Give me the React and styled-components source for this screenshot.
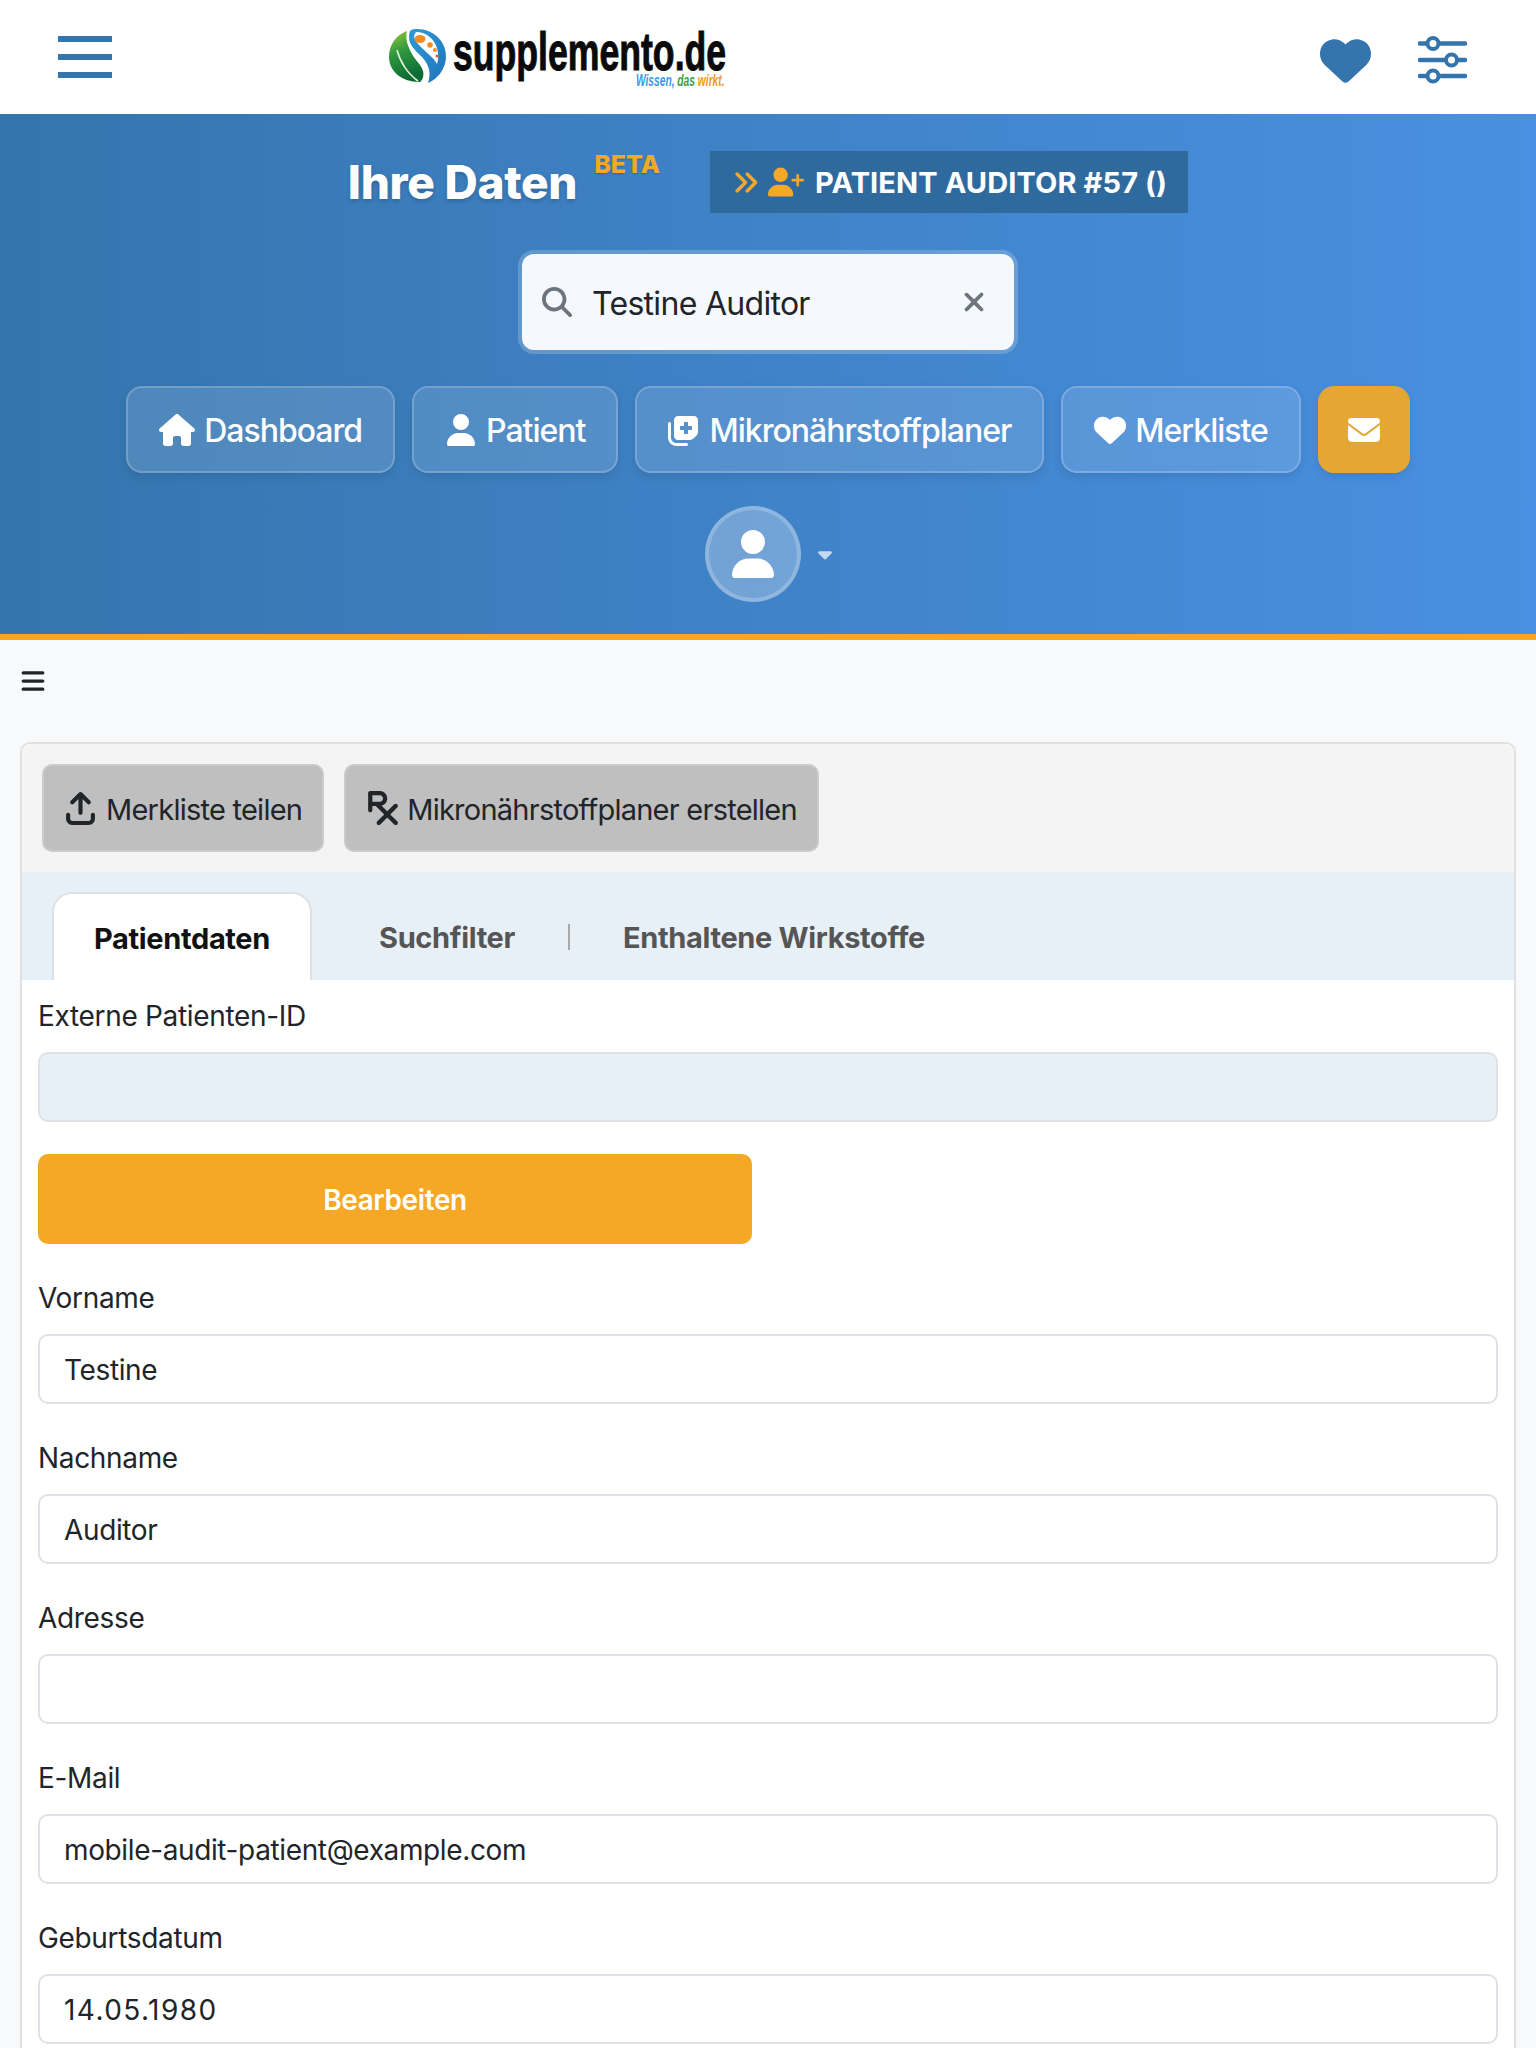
import React from "react";
import styled, { createGlobalStyle } from "styled-components";
import {
  FaAnglesRight,
  FaArrowUpFromBracket,
  FaBars,
  FaCaretDown,
  FaEnvelope,
  FaHeart,
  FaHouse,
  FaMagnifyingGlass,
  FaNotesMedical,
  FaPrescription,
  FaUser,
  FaUserPlus,
  FaXmark,
} from "react-icons/fa6";

const COLORS = {
  blue: "#3575ad",
  orange: "#f4a825",
  text: "#212529",
  tabBar: "#e8f0f7",
  line: "#dee2e6",
};

const GlobalStyle = createGlobalStyle`
  html, body {
    margin: 0;
    padding: 0;
    background: #f8f9fa;
    font-family: Inter, "Liberation Sans", sans-serif;
    color: ${COLORS.text};
  }
  * {
    box-sizing: border-box;
  }
`;

const Page = styled.div`
  width: 1536px;
`;

const TopBar = styled.header`
  height: 114px;
  background: #fff;
  display: flex;
  align-items: center;
  padding: 0 69px 0 58px;
`;

const Burger = styled.div`
  width: 54px;
  height: 42px;
  display: flex;
  flex-direction: column;
  justify-content: space-between;
  margin-right: 277px;
  span {
    display: block;
    height: 6px;
    background: ${COLORS.blue};
  }
`;

const Logo = styled.div`
  display: flex;
  align-items: center;
  height: 60px;
`;

const Wordmark = styled.div`
  position: relative;
  width: 272px;
  height: 60px;
  margin-left: 6px;
`;

const WordmarkText = styled.span`
  position: absolute;
  left: 0;
  top: 3px;
  font-family: "Liberation Sans", sans-serif;
  font-weight: 700;
  font-size: 53px;
  line-height: 44px;
  color: #0a0a0a;
  white-space: nowrap;
  -webkit-text-stroke: 1px #0a0a0a;
  transform: scaleX(0.672);
  transform-origin: left center;
`;

const Tagline = styled.span`
  position: absolute;
  right: 0;
  top: 47px;
  font-family: "Liberation Sans", sans-serif;
  font-style: italic;
  font-weight: 700;
  font-size: 16px;
  line-height: 14px;
  white-space: nowrap;
  transform: scaleX(0.64);
  transform-origin: right center;
`;

const TagWord = styled.span`
  color: ${(p) => p.$color};
`;

const TopIcons = styled.div`
  margin-left: auto;
  padding-top: 6px;
  display: flex;
  align-items: center;
  gap: 47px;
  color: ${COLORS.blue};
`;

const Banner = styled.section`
  background: linear-gradient(90deg, #3575ad 0%, #4a90e2 100%);
  border-bottom: 6px solid ${COLORS.orange};
  padding: 37px 0 32px;
  display: flex;
  flex-direction: column;
  align-items: center;
`;

const TitleRow = styled.div`
  display: flex;
  align-items: center;
  height: 62px;
`;

const Title = styled.h1`
  margin: 0;
  font-size: 46px;
  font-weight: 800;
  letter-spacing: -0.3px;
  line-height: 62px;
  color: #fff;
  text-shadow: 0 2px 4px rgba(0, 0, 0, 0.2);
`;

const Beta = styled.span`
  align-self: flex-start;
  margin: -5px 50px 0 17px;
  font-size: 25px;
  line-height: 36px;
  font-weight: 800;
  color: ${COLORS.orange};
  text-shadow: 0 1px 2px rgba(0, 0, 0, 0.2);
`;

const PatientBadge = styled.div`
  height: 62px;
  padding: 0 21px 0 22px;
  display: flex;
  align-items: center;
  background: #2f6a9f;
  color: #fff;
  font-size: 29px;
  font-weight: 700;
  letter-spacing: 0.1px;
  white-space: nowrap;
  svg {
    color: ${COLORS.orange};
  }
`;

const BadgeIcon = styled.span`
  display: flex;
  margin: 0 11px 0 9px;
`;

const SearchBox = styled.div`
  width: 492px;
  height: 96px;
  margin-top: 41px;
  padding: 0 25px 0 20px;
  display: flex;
  align-items: center;
  background: #f5f8fc;
  border-radius: 12px;
  box-shadow: 0 0 0 4px rgba(255, 255, 255, 0.2);
  font-size: 32px;
  letter-spacing: -0.7px;
  color: ${COLORS.text};
  svg {
    color: #6c757d;
    flex: none;
  }
`;

const SearchText = styled.span`
  flex: 1;
  margin-left: 20px;
  padding-top: 2px;
`;

const NavRow = styled.nav`
  display: flex;
  gap: 17px;
  margin-top: 36px;
`;

const NavButton = styled.a`
  height: 87px;
  padding: 0 31px;
  display: flex;
  align-items: center;
  gap: 9px;
  border-radius: 16px;
  background: rgba(255, 255, 255, 0.12);
  border: 2px solid rgba(255, 255, 255, 0.2);
  box-shadow: 0 4px 10px rgba(0, 0, 0, 0.1);
  color: #fff;
  font-size: 32px;
  font-weight: 500;
  letter-spacing: -1px;
  white-space: nowrap;
`;

const ButtonLabel = styled.span`
  padding-top: 2px;
`;

const MailButton = styled(NavButton)`
  width: 92px;
  padding: 0;
  justify-content: center;
  background: #e5a733;
  border-color: #e5a733;
`;

const AccountRow = styled.div`
  display: flex;
  align-items: center;
  margin-top: 33px;
  margin-left: 5px;
  gap: 13px;
`;

const Avatar = styled.div`
  width: 96px;
  height: 96px;
  border-radius: 50%;
  display: flex;
  align-items: center;
  justify-content: center;
  background: rgba(255, 255, 255, 0.27);
  border: 4px solid rgba(255, 255, 255, 0.2);
  color: #fff;
`;

const Caret = styled.div`
  display: flex;
  color: rgba(255, 255, 255, 0.7);
`;

const Main = styled.main`
  padding: 0 20px;
`;

const SideToggle = styled.div`
  height: 102px;
  padding-top: 28px;
  display: flex;
  align-items: flex-start;
  color: ${COLORS.text};
`;

const Card = styled.div`
  border: 2px solid #e0e0e0;
  border-radius: 10px;
  background: #fff;
  overflow: hidden;
`;

const Actions = styled.div`
  height: 128px;
  background: #f4f4f4;
  padding: 20px;
  display: flex;
  gap: 20px;
`;

const ActionButton = styled.a`
  height: 88px;
  padding: 0 20px;
  display: flex;
  align-items: center;
  gap: ${(p) => p.$gap}px;
  border-radius: 10px;
  background: #bfbfbf;
  border: 2px solid #cbcbcb;
  font-size: 29px;
  letter-spacing: -0.75px;
  color: ${COLORS.text};
  white-space: nowrap;
`;

const TabBar = styled.div`
  height: 108px;
  background: ${COLORS.tabBar};
  padding: 20px 0 0 30px;
  display: flex;
  align-items: flex-start;
`;

const Tab = styled.div`
  height: 88px;
  padding-top: 2px;
  display: flex;
  align-items: center;
  font-size: 29px;
  font-weight: 700;
  letter-spacing: -0.35px;
  color: ${(p) => (p.$active ? "#111" : "#555")};
  padding-inline: ${(p) => (p.$active ? "40px" : "0")};
  background: ${(p) => (p.$active ? "#fff" : "transparent")};
  border: ${(p) => (p.$active ? "2px solid #e0e0e0" : "none")};
  border-bottom: none;
  border-radius: 20px 20px 0 0;
  white-space: nowrap;
`;

const TabGap = styled.div`
  width: ${(p) => p.$width}px;
`;

const TabDivider = styled.div`
  width: 2px;
  height: 26px;
  margin: 32px 53px 0 53px;
  background: #a8a8a8;
`;

const Form = styled.div`
  padding: 18px 16px 0;
`;

const Field = styled.div`
  margin-bottom: 36px;
`;

const Label = styled.label`
  display: block;
  font-size: 28px;
  line-height: 36px;
  letter-spacing: -0.33px;
  margin-bottom: 18px;
  color: ${COLORS.text};
`;

const TextInput = styled.input`
  display: block;
  width: 100%;
  height: 70px;
  padding: 2px 24px 0;
  border: 2px solid ${COLORS.line};
  border-radius: 10px;
  background: ${(p) => (p.$locked ? COLORS.tabBar : "#fff")};
  font-family: Inter, "Liberation Sans", sans-serif;
  font-size: 28px;
  letter-spacing: ${(p) => (p.$date ? "1.44px" : "-0.37px")};
  color: ${COLORS.text};
`;

const EditButton = styled.button`
  display: block;
  width: 714px;
  height: 90px;
  margin: -4px 0 36px;
  padding-top: 2px;
  border: none;
  border-radius: 10px;
  background: ${COLORS.orange};
  color: #fff;
  font-family: Inter, "Liberation Sans", sans-serif;
  font-size: 28px;
  font-weight: 600;
  letter-spacing: -0.4px;
`;

const Globe = () => (
  <svg width="58" height="58" viewBox="0 0 58 58">
    <defs>
      <linearGradient id="leaf" x1="0" y1="0" x2="0.3" y2="1">
        <stop offset="0" stopColor="#9cc73a" />
        <stop offset="0.45" stopColor="#2f9a3f" />
        <stop offset="1" stopColor="#0c6a35" />
      </linearGradient>
      <linearGradient id="wave" x1="0" y1="0" x2="1" y2="1">
        <stop offset="0" stopColor="#2d9ad8" />
        <stop offset="1" stopColor="#1f74bd" />
      </linearGradient>
    </defs>
    <path d="M18 3C7 7 0 17 0 29c0 13 11 25 31 25 3-2 4-7 3-11-2-7-8-11-11-17C19 19 16 11 18 3Z" fill="url(#leaf)" />
    <path d="M8 22c3 12 11 24 21 31" stroke="#e4f0d8" strokeWidth="1.6" fill="none" />
    <path d="M28 1C45 1 57 14 57 28c0 14-10 24-18 27 3-9 2-17-6-26-7-7-16-14-12-26 2-2 5-2 7-2Z" fill="url(#wave)" />
    <path d="M27 4c11 0 18 7 21 16 2 8 1 13 0 16-3-6-8-9-13-14C28 15 22 10 27 4Z" fill="#fff" />
    <ellipse cx="31" cy="11" rx="5.5" ry="4" fill="#f28c1e" />
    <circle cx="41" cy="17" r="2.8" fill="#f28c1e" />
    <circle cx="46" cy="22" r="2" fill="#f28c1e" />
    <circle cx="48" cy="28" r="1.5" fill="#e4572e" />
  </svg>
);

const SlidersIcon = () => (
  <svg width="49" height="48" viewBox="0 0 49 48" fill="none" stroke="currentColor" strokeWidth="4.5" strokeLinecap="round">
    <path d="M2 7.5h6M23 7.5h24M2 24h24M41 24h6M2 40h6M23 40h24" />
    <circle cx="15" cy="7.5" r="5.5" strokeWidth="4" />
    <circle cx="33.5" cy="24" r="5.5" strokeWidth="4" />
    <circle cx="15" cy="40" r="5.5" strokeWidth="4" />
  </svg>
);

const fields = [
  { label: "Vorname", value: "Testine" },
  { label: "Nachname", value: "Auditor" },
  { label: "Adresse", value: "" },
  { label: "E-Mail", value: "mobile-audit-patient@example.com" },
  { label: "Geburtsdatum", value: "14.05.1980", date: true },
];

const App = () => {
  return (
    <Page>
      <GlobalStyle />
      <TopBar>
        <Burger>
          <span />
          <span />
          <span />
        </Burger>
        <Logo>
          <Globe />
          <Wordmark>
            <WordmarkText>supplemento.de</WordmarkText>
            <Tagline>
              <TagWord $color="#3b9ae8">Wissen, </TagWord>
              <TagWord $color="#3f9e46">das </TagWord>
              <TagWord $color="#f0982a">wirkt.</TagWord>
            </Tagline>
          </Wordmark>
        </Logo>
        <TopIcons>
          <FaHeart size={51} />
          <SlidersIcon />
        </TopIcons>
      </TopBar>

      <Banner>
        <TitleRow>
          <Title>Ihre Daten</Title>
          <Beta>BETA</Beta>
          <PatientBadge>
            <FaAnglesRight size={27} />
            <BadgeIcon>
              <FaUserPlus size={36} />
            </BadgeIcon>
            PATIENT AUDITOR #57 ()
          </PatientBadge>
        </TitleRow>

        <SearchBox>
          <FaMagnifyingGlass size={30} />
          <SearchText>Testine Auditor</SearchText>
          <FaXmark size={30} />
        </SearchBox>

        <NavRow>
          <NavButton>
            <FaHouse size={36} />
            <ButtonLabel>Dashboard</ButtonLabel>
          </NavButton>
          <NavButton>
            <FaUser size={32} />
            <ButtonLabel>Patient</ButtonLabel>
          </NavButton>
          <NavButton>
            <FaNotesMedical size={32} />
            <ButtonLabel>Mikronährstoffplaner</ButtonLabel>
          </NavButton>
          <NavButton>
            <FaHeart size={32} />
            <ButtonLabel>Merkliste</ButtonLabel>
          </NavButton>
          <MailButton>
            <FaEnvelope size={32} />
          </MailButton>
        </NavRow>

        <AccountRow>
          <Avatar>
            <FaUser size={48} />
          </Avatar>
          <Caret>
            <FaCaretDown size={22} />
          </Caret>
        </AccountRow>
      </Banner>

      <Main>
        <SideToggle>
          <FaBars size={26} />
        </SideToggle>
        <Card>
          <Actions>
            <ActionButton $gap={9}>
              <FaArrowUpFromBracket size={33} />
              <ButtonLabel>Merkliste teilen</ButtonLabel>
            </ActionButton>
            <ActionButton $gap={7}>
              <FaPrescription size={34} />
              <ButtonLabel>Mikronährstoffplaner erstellen</ButtonLabel>
            </ActionButton>
          </Actions>
          <TabBar>
            <Tab $active>Patientdaten</Tab>
            <TabGap $width={67} />
            <Tab>Suchfilter</Tab>
            <TabDivider />
            <Tab>Enthaltene Wirkstoffe</Tab>
          </TabBar>
          <Form>
            <Field>
              <Label>Externe Patienten-ID</Label>
              <TextInput $locked readOnly value="" />
            </Field>
            <EditButton>Bearbeiten</EditButton>
            {fields.map((field) => (
              <Field key={field.label}>
                <Label>{field.label}</Label>
                <TextInput $date={field.date} readOnly value={field.value} />
              </Field>
            ))}
          </Form>
        </Card>
      </Main>
    </Page>
  );
};

export default App;
